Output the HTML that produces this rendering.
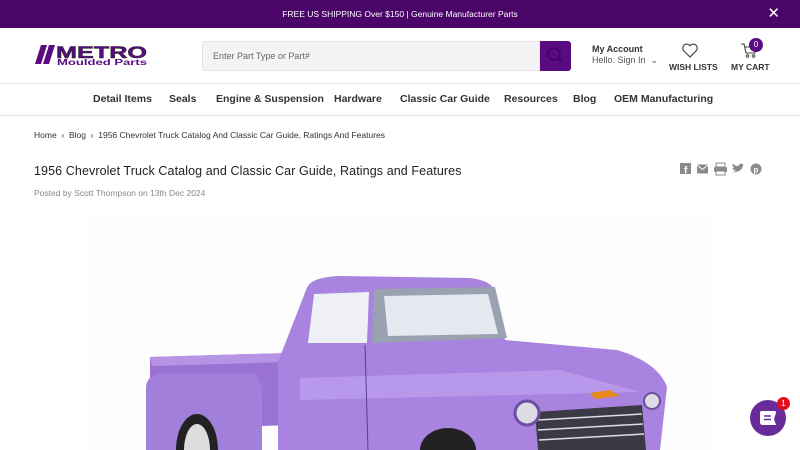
<!DOCTYPE html>
<html><head><meta charset="utf-8"><style>
*{margin:0;padding:0;box-sizing:border-box}
body{width:800px;height:450px;overflow:hidden;background:#fff;font-family:"Liberation Sans",sans-serif;color:#333;position:relative}
.top{height:28px;background:#4b0468;color:#fff;font-size:8.5px;text-align:center;line-height:29px;position:relative}
.top .x{position:absolute;right:20px;top:0;font-size:15px;line-height:28px}
.hdr{height:56px;border-bottom:1px solid #e6e6e6}
.logo{position:absolute;left:35px;top:43px}
.search{position:absolute;left:202px;top:41px;width:338px;height:30px;background:#f4f4f4;border:1px solid #e2e2e2;border-radius:3px 0 0 3px;font-size:9px;color:#666;line-height:28px;padding-left:10px}
.sbtn{position:absolute;left:540px;top:41px;width:31px;height:30px;background:#5a0b82;border-radius:0 3px 3px 0}
.acct{position:absolute;left:592px;top:44px;font-size:9px;line-height:11px}
.nav{height:32px;border-bottom:1px solid #e2e2e2;font-size:10.5px;font-weight:bold;color:#333}
.nav span{position:absolute;top:93px}
.bc{position:absolute;left:34px;top:130px;font-size:8.5px;color:#333}
h1{position:absolute;left:34px;top:164px;font-size:12.5px;font-weight:normal;color:#222;letter-spacing:.1px}
.posted{position:absolute;left:34px;top:188px;font-size:8.5px;color:#888}
.chat{position:absolute;left:750px;top:400px;width:36px;height:36px;border-radius:50%;background:#6a2b9a}
.badge{position:absolute;left:777px;top:397px;width:13px;height:13px;border-radius:50%;background:#e3101a;color:#fff;font-size:8px;text-align:center;line-height:13px}
</style></head><body>
<div class="top">FREE US SHIPPING Over $150 | Genuine Manufacturer Parts<span class="x">✕</span></div>
<div class="hdr"></div>
<svg class="logo" width="115" height="24" viewBox="0 0 115 24">
  <polygon points="6,2 12,2 6,21 0,21" fill="#5a0b82"/>
  <polygon points="14,2 20,2 14,21 8,21" fill="#5a0b82"/>
  <text x="21" y="15" font-family="Liberation Sans" font-weight="bold" font-size="17" fill="#5a0b82" stroke="#222" stroke-width=".5" textLength="91" lengthAdjust="spacingAndGlyphs">METRO</text>
  <text x="22" y="22" font-family="Liberation Sans" font-weight="bold" font-size="8" fill="#5a0b82" textLength="90" lengthAdjust="spacingAndGlyphs">Moulded Parts</text>
</svg>
<div class="search">Enter Part Type or Part#</div>
<div class="sbtn"><svg width="31" height="30"><circle cx="14" cy="13" r="6" fill="none" stroke="#3a0455" stroke-width="1.3"/><line x1="18.5" y1="17.5" x2="22" y2="21" stroke="#3a0455" stroke-width="1.5"/></svg></div>
<div class="acct"><b>My Account</b><br><span style="color:#555">Hello. Sign In &nbsp;⌄</span></div>
<svg style="position:absolute;left:681px;top:42px" width="18" height="17"><path d="M9 15 L2.5 8.5 A3.8 3.8 0 0 1 9 3.8 A3.8 3.8 0 0 1 15.5 8.5 Z" fill="none" stroke="#444" stroke-width="1.2"/></svg>
<div style="position:absolute;left:669px;top:62px;font-size:8.5px;font-weight:bold;color:#333">WISH LISTS</div>
<svg style="position:absolute;left:740px;top:42px" width="18" height="17"><path d="M1 2 H4 L6 11 H15 L16 5 H5" fill="none" stroke="#444" stroke-width="1.1"/><circle cx="7.5" cy="14" r="1.3" fill="none" stroke="#444"/><circle cx="13.5" cy="14" r="1.3" fill="none" stroke="#444"/></svg>
<div style="position:absolute;left:749px;top:38px;width:14px;height:14px;border-radius:50%;background:#5a0b82;color:#fff;font-size:8px;text-align:center;line-height:14px">0</div>
<div style="position:absolute;left:731px;top:62px;font-size:8.5px;font-weight:bold;color:#333">MY CART</div>
<div class="nav">
 <span style="left:93px">Detail Items</span><span style="left:169px">Seals</span><span style="left:216px">Engine &amp; Suspension</span><span style="left:334px">Hardware</span><span style="left:400px">Classic Car Guide</span><span style="left:504px">Resources</span><span style="left:573px">Blog</span><span style="left:614px">OEM Manufacturing</span>
</div>
<div class="bc">Home &nbsp;›&nbsp; Blog &nbsp;›&nbsp; 1956 Chevrolet Truck Catalog And Classic Car Guide, Ratings And Features</div>
<h1>1956 Chevrolet Truck Catalog and Classic Car Guide, Ratings and Features</h1>
<div class="posted">Posted by Scott Thompson on 13th Dec 2024</div>
<svg style="position:absolute;left:680px;top:162px" width="84" height="14" fill="#8a8a8a">
 <rect x="0" y="1" width="11" height="11"/><text x="4" y="11.5" font-size="10" font-weight="bold" fill="#fff" font-family="Liberation Sans">f</text>
 <rect x="17" y="2.5" width="11" height="9"/><path d="M17 3 L22.5 7.5 L28 3" stroke="#fff" fill="none"/>
 <rect x="34" y="5" width="13" height="5" rx="1"/><rect x="36" y="1" width="9" height="4" fill="none" stroke="#8a8a8a"/><rect x="36" y="9" width="9" height="4" fill="#fff" stroke="#8a8a8a"/>
 <path d="M52 10 C57 11 63 8 63 3 L65 2 L63.5 3 C62 1 59 1 58.5 4 C56 4 54 3 52.5 1.5 C52 4 53.5 5.5 54.5 6 L52.5 6 C53 8 55 8.5 56 8.5 C55 9.5 53.5 10 52 10Z"/>
 <circle cx="76" cy="7" r="5.5"/><text x="73.5" y="10.5" font-size="8" font-weight="bold" fill="#fff" font-family="Liberation Sans">p</text>
</svg>
<svg style="position:absolute;left:88px;top:215px" width="624" height="235" viewBox="88 215 624 235">
 <rect x="88" y="215" width="624" height="235" fill="#fdfdfe"/>
 <!-- bed -->
 <polygon points="150,357 287,353 290,425 150,430" fill="#9a72d4"/>
 <polygon points="150,357 287,353 287,362 152,366" fill="#b594e6"/>
 <path d="M146 388 C146 376 156 373 175 373 L250 373 C258 373 262 382 262 398 L262 450 L146 450 Z" fill="#a37fdc"/>
 <!-- cab + hood -->
 <path d="M278 362 L306 290 C309 281 318 277 340 276 L470 278 C485 280 492 284 494 290 L505 340 L617 350 C645 358 662 372 667 387 L660 450 L278 450 Z" fill="#a883df"/>
 <path d="M300 378 L560 370 L640 392 L300 400 Z" fill="#b898ea"/>
 <line x1="365" y1="345" x2="368" y2="450" stroke="#5b3f8f" stroke-width="1"/>
 <polygon points="314,294 369,292 367,343 308,343" fill="#eef0f6"/>
 <polygon points="374,289 495,287 507,338 372,343" fill="#9aa1b0"/>
 <polygon points="384,296 488,294 498,334 388,336" fill="#e4e8ef"/>
 <!-- grille & headlights -->
 <polygon points="535,412 642,405 646,450 538,450" fill="#3c3946"/>
 <g stroke="#ddd" stroke-width="1.5"><line x1="538" y1="420" x2="642" y2="414"/><line x1="538" y1="430" x2="643" y2="424"/><line x1="539" y1="440" x2="644" y2="434"/></g>
 <circle cx="527" cy="413" r="12" fill="#dcdde4" stroke="#6b4fa0" stroke-width="3"/>
 <circle cx="652" cy="401" r="8" fill="#dcdde4" stroke="#6b4fa0" stroke-width="2"/>
 <polygon points="590,393 610,390 620,396 595,399" fill="#e88a1c"/>
 <!-- wheels -->
 <path d="M176 450 A21 36 0 0 1 218 450 Z" fill="#222"/><path d="M184 450 A13 26 0 0 1 210 450 Z" fill="#ddd"/>
 <path d="M420 450 A28 22 0 0 1 476 450 Z" fill="#222"/>
</svg>
<div class="chat"><svg width="36" height="36"><path d="M11 11 H25 C26 11 26 12 26 13 L24 19 L26 25 H13 C11 25 10 24 10 22 V12 Z" fill="#fff"/><line x1="14" y1="16" x2="21" y2="16" stroke="#6a2b9a" stroke-width="1.5"/><line x1="14" y1="19.5" x2="21" y2="19.5" stroke="#6a2b9a" stroke-width="1.5"/></svg></div>
<div class="badge">1</div>
</body></html>
